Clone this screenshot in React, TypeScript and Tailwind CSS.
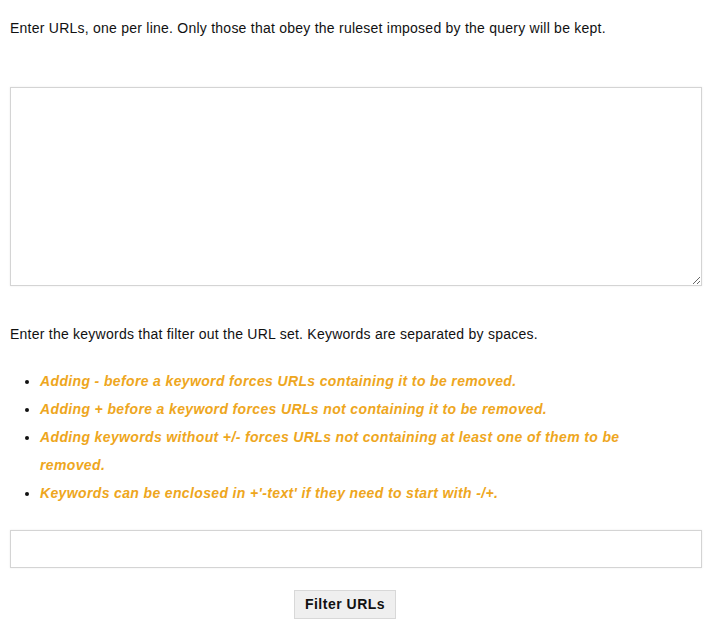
export default function App() {
  return (
    <div className="pl-[10px] pr-[12px] pt-[14px] font-['Liberation_Sans',Arial,sans-serif] text-[14px] text-[#111] tracking-[0.24px]">
      <p className="leading-[28px]">
        Enter URLs, one per line. Only those that obey the ruleset imposed by the query will be kept.
      </p>

      <textarea className="mt-[45px] block h-[199px] w-full resize-y border border-[#d4d4d4] bg-white shadow-[0_0_2px_rgba(0,0,0,0.08)] outline-none" />

      <p className="mt-[34px] leading-[28px]">
        Enter the keywords that filter out the URL set. Keywords are separated by spaces.
      </p>

      <ul className="mt-[19px] list-disc pl-[30px] font-bold italic leading-[28px] tracking-[0.36px] text-[#eea620] marker:text-[#111]">
        <li>Adding - before a keyword forces URLs containing it to be removed.</li>
        <li>Adding + before a keyword forces URLs not containing it to be removed.</li>
        <li className="pr-[60px]">Adding keywords without +/- forces URLs not containing at least one of them to be removed.</li>
        <li>Keywords can be enclosed in +'-text' if they need to start with -/+.</li>
      </ul>

      <input
        type="text"
        className="mt-[23px] block h-[38px] w-full border border-[#d4d4d4] bg-white shadow-[0_0_2px_rgba(0,0,0,0.08)] outline-none"
      />

      <div className="mt-[22px] flex justify-center">
        <button className="mr-[22px] h-[29px] w-[102px] border border-[#d8d8d8] bg-[#efefef] text-[14px] font-bold tracking-[0.5px] text-[#111]">
          Filter URLs
        </button>
      </div>
    </div>
  )
}
